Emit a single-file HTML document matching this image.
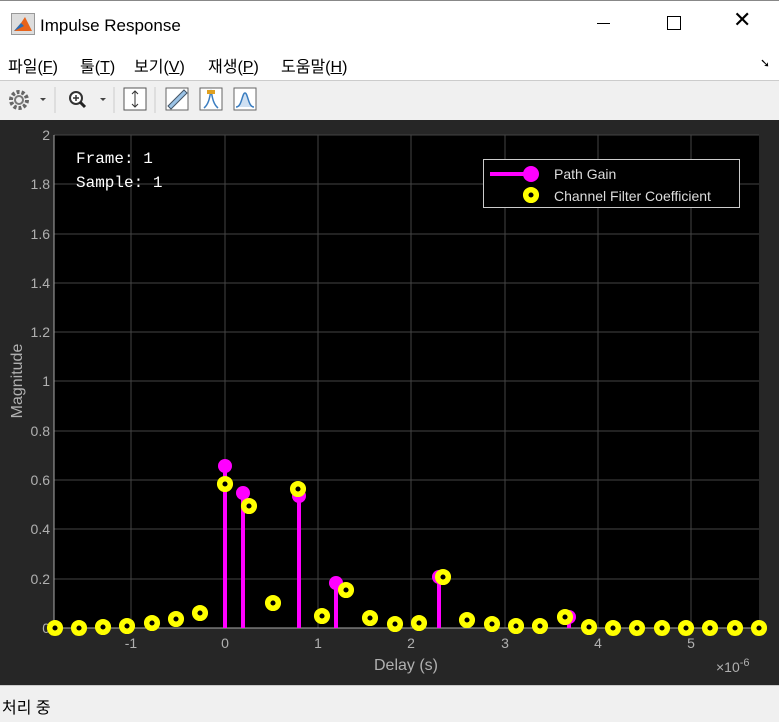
<!DOCTYPE html>
<html><head><meta charset="utf-8"><style>
body{margin:0;width:779px;height:721px;overflow:hidden;background:#f0f0f0;font-family:"Liberation Sans","Noto Sans CJK KR",sans-serif;position:relative}
.t{position:absolute;left:0;top:0;width:779px;height:48px;background:#fff;border-top:1px solid #888}
.menu{position:absolute;top:48px;left:0;width:779px;height:32px;background:#fff;border-bottom:1px solid #ccc;font-size:16px}
.menu span{position:absolute;top:5px}
.tb{position:absolute;top:81px;left:0;width:779px;height:38px;background:#f0f0f0}
.st{position:absolute;top:685px;left:0;width:779px;height:36px;background:#f0f0f0;border-top:1px solid #ccc;font-size:16px}
</style></head><body>
<div class="t">
<svg style="position:absolute;left:11px;top:12px" width="24" height="22"><rect x="0.5" y="0.5" width="23" height="21" fill="#ddd" stroke="#999"/><path d="M3 18 L10 10 L14 4 L18 12 L21 18 Z" fill="#e8631a"/><path d="M3 18 L10 10 L13 13 Z" fill="#2a6db5"/></svg>
<div style="position:absolute;left:40px;top:15px;font-size:17px;color:#000">Impulse Response</div>
<div style="position:absolute;left:597px;top:22px;width:13px;height:1px;background:#000"></div>
<div style="position:absolute;left:667px;top:15px;width:12px;height:12px;border:1px solid #000"></div>
<div style="position:absolute;left:733px;top:6px;font-size:22px;font-weight:300">✕</div>
</div>
<div class="menu"><span style="left:8px">파일(<u>F</u>)</span><span style="left:80px">툴(<u>T</u>)</span><span style="left:134px">보기(<u>V</u>)</span><span style="left:208px">재생(<u>P</u>)</span><span style="left:281px">도움말(<u>H</u>)</span><span style="left:760px;font-size:12px;top:8px">➘</span></div>
<div class="tb">
<svg width="300" height="38">
<circle cx="19" cy="19" r="8" fill="none" stroke="#666" stroke-width="4" stroke-dasharray="3 2"/><circle cx="19" cy="19" r="4" fill="none" stroke="#777" stroke-width="2"/>
<path d="M40 17 h6 l-3 3z" fill="#444"/>
<line x1="55" y1="6" x2="55" y2="32" stroke="#ccc"/>
<circle cx="76" cy="17" r="6" fill="#fff" stroke="#333" stroke-width="2"/><path d="M73 17h6M76 14v6" stroke="#333" stroke-width="1.5"/><path d="M80 21 l5 5" stroke="#222" stroke-width="3"/>
<path d="M100 17 h6 l-3 3z" fill="#444"/>
<line x1="114" y1="6" x2="114" y2="32" stroke="#ccc"/>
<rect x="124" y="7" width="22" height="22" fill="#fff" stroke="#555"/><path d="M135 10v16M132 13l3-3 3 3M132 23l3 3 3-3" stroke="#333" fill="none"/>
<line x1="155" y1="6" x2="155" y2="32" stroke="#ccc"/>
<rect x="166" y="7" width="22" height="22" fill="#fff" stroke="#666"/><path d="M168 25 L184 9 L187 12 L171 28Z" fill="#9cc3e6" stroke="#456"/>
<rect x="200" y="7" width="22" height="22" fill="#fff" stroke="#666"/><path d="M204 27 C210 22 210 12 211 10 C212 12 212 22 218 27" fill="none" stroke="#3a7dc0" stroke-width="1.5"/><rect x="207" y="9" width="8" height="4" fill="#e0a020"/>
<rect x="234" y="7" width="22" height="22" fill="#fff" stroke="#666"/><path d="M236 26 C242 26 242 12 245 12 C248 12 248 26 254 26" fill="#cfe0f2" stroke="#3a7dc0" stroke-width="1.5"/>
</svg></div>
<svg style="position:absolute;left:0;top:120px" width="779" height="565">
<rect width="779" height="565" fill="#262626"/>
<g transform="translate(0,-120)">
<rect x="54" y="135" width="705" height="493" fill="#000"/>
<g stroke="#444" stroke-width="1">
<path d="M131 135V628M225 135V628M318 135V628M411 135V628M505 135V628M598 135V628M691 135V628"/>
<path d="M54 135H759M54 184H759M54 234H759M54 283H759M54 332H759M54 381H759M54 431H759M54 480H759M54 529H759M54 579H759"/>
</g>
<path d="M54 135V628H759" stroke="#aaa" fill="none"/>
<g fill="#b0b0b0" font-size="14" font-family="Liberation Sans" text-anchor="end">
<text x="50" y="140">2</text><text x="50" y="189">1.8</text><text x="50" y="239">1.6</text><text x="50" y="288">1.4</text><text x="50" y="337">1.2</text><text x="50" y="386">1</text><text x="50" y="436">0.8</text><text x="50" y="485">0.6</text><text x="50" y="534">0.4</text><text x="50" y="584">0.2</text><text x="50" y="633">0</text>
</g>
<g fill="#b0b0b0" font-size="14" font-family="Liberation Sans" text-anchor="middle">
<text x="131" y="648">-1</text><text x="225" y="648">0</text><text x="318" y="648">1</text><text x="411" y="648">2</text><text x="505" y="648">3</text><text x="598" y="648">4</text><text x="691" y="648">5</text>
<text x="406" y="670" font-size="16">Delay (s)</text>
</g>
<text x="716" y="672" fill="#b0b0b0" font-size="14" font-family="Liberation Sans">×10<tspan font-size="11" dy="-6">-6</tspan></text>
<text transform="translate(22,381) rotate(-90)" fill="#b0b0b0" font-size="16" font-family="Liberation Sans" text-anchor="middle">Magnitude</text>
<text x="76" y="163" fill="#fff" font-size="16" font-family="Liberation Mono">Frame: 1</text>
<text x="76" y="187" fill="#fff" font-size="16" font-family="Liberation Mono">Sample: 1</text>
<g stroke="#ff00ff" stroke-width="4">
<path d="M225 628V466M243 628V493M299 628V496M336 628V583M439 628V577M569 628V617"/>
</g>
<g fill="#ff00ff">
<circle cx="225" cy="466" r="7"/><circle cx="243" cy="493" r="7"/><circle cx="299" cy="496" r="7"/><circle cx="336" cy="583" r="7"/><circle cx="439" cy="577" r="7"/><circle cx="569" cy="617" r="7"/>
</g>
<g fill="#000" stroke="#ffff00" stroke-width="5.5">
<circle cx="55" cy="628" r="5.3"/><circle cx="79" cy="628" r="5.3"/><circle cx="103" cy="627" r="5.3"/><circle cx="127" cy="626" r="5.3"/><circle cx="152" cy="623" r="5.3"/><circle cx="176" cy="619" r="5.3"/><circle cx="200" cy="613" r="5.3"/><circle cx="225" cy="484" r="5.3"/><circle cx="249" cy="506" r="5.3"/><circle cx="273" cy="603" r="5.3"/><circle cx="298" cy="489" r="5.3"/><circle cx="322" cy="616" r="5.3"/><circle cx="346" cy="590" r="5.3"/><circle cx="370" cy="618" r="5.3"/><circle cx="395" cy="624" r="5.3"/><circle cx="419" cy="623" r="5.3"/><circle cx="443" cy="577" r="5.3"/><circle cx="467" cy="620" r="5.3"/><circle cx="492" cy="624" r="5.3"/><circle cx="516" cy="626" r="5.3"/><circle cx="540" cy="626" r="5.3"/><circle cx="565" cy="617" r="5.3"/><circle cx="589" cy="627" r="5.3"/><circle cx="613" cy="628" r="5.3"/><circle cx="637" cy="628" r="5.3"/><circle cx="662" cy="628" r="5.3"/><circle cx="686" cy="628" r="5.3"/><circle cx="710" cy="628" r="5.3"/><circle cx="735" cy="628" r="5.3"/><circle cx="759" cy="628" r="5.3"/>
</g>
<rect x="483.5" y="159.5" width="256" height="48" fill="#000" stroke="#ccc"/>
<path d="M490 174H530" stroke="#ff00ff" stroke-width="4"/><circle cx="531" cy="174" r="8" fill="#ff00ff"/>
<circle cx="531" cy="195" r="5.3" fill="#000" stroke="#ffff00" stroke-width="5.5"/>
<text x="554" y="179" fill="#ddd" font-size="14" font-family="Liberation Sans">Path Gain</text>
<text x="554" y="201" fill="#ddd" font-size="14" font-family="Liberation Sans">Channel Filter Coefficient</text>
</g></svg>
<div class="st"><span style="position:absolute;left:2px;top:8px">처리 중</span></div>
</body></html>
